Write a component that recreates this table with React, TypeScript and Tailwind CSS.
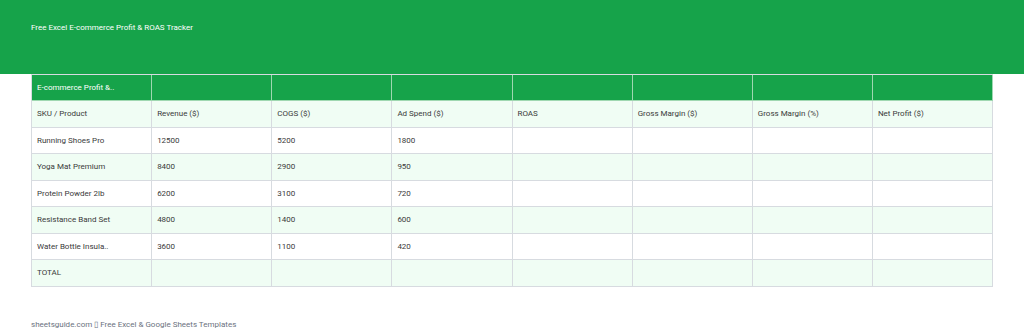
const columns = ['SKU / Product', 'Revenue ($)', 'COGS ($)', 'Ad Spend ($)', 'ROAS', 'Gross Margin ($)', 'Gross Margin (%)', 'Net Profit ($)']

const rows = [
  ['Running Shoes Pro', '12500', '5200', '1800'],
  ['Yoga Mat Premium', '8400', '2900', '950'],
  ['Protein Powder 2lb', '6200', '3100', '720'],
  ['Resistance Band Set', '4800', '1400', '600'],
  ['Water Bottle Insula..', '3600', '1100', '420'],
  ['TOTAL'],
]

const App = () => {
  return (
    <div className="w-[1024px] h-[335px] bg-white font-['Roboto',sans-serif] text-[8px] text-[#3a3a3a] flex flex-col">
      <header className="h-[74px] bg-[#16a34a] px-[31px] pt-[22px] shrink-0">
        <h1 className="text-white text-[8px] leading-[12px]">Free Excel E-commerce Profit &amp; ROAS Tracker</h1>
      </header>

      <div className="mx-[31px] border-l border-t border-[#d7dbe0]">
        <div className="grid grid-cols-8 h-[26px] bg-[#16a34a]">
          <div className="border-r border-b border-[#9fd8b1] px-[5px] flex items-center text-white">E-commerce Profit &amp;..</div>
          {Array.from({ length: 7 }).map((_, i) => (
            <div key={i} className="border-r border-b border-[#9fd8b1]" />
          ))}
        </div>
        <div className="grid grid-cols-8 h-[27px] bg-[#f0fdf4]">
          {columns.map((c) => (
            <div key={c} className="border-r border-b border-[#d7dbe0] px-[5px] flex items-center">{c}</div>
          ))}
        </div>
        {rows.map((r, i) => (
          <div key={i} className={`grid grid-cols-8 ${i % 2 === 0 ? 'h-[26px] bg-white' : 'h-[27px] bg-[#f0fdf4]'}`}>
            {Array.from({ length: 8 }).map((_, j) => (
              <div key={j} className="border-r border-b border-[#d7dbe0] px-[5px] flex items-center">{r[j] ?? ''}</div>
            ))}
          </div>
        ))}
      </div>

      <footer className="mt-auto mb-[4px] px-[31px] text-[8px] leading-[12px] text-[#6b7280]">
        sheetsguide.com ▯ Free Excel &amp; Google Sheets Templates
      </footer>
    </div>
  )
}

export default App
